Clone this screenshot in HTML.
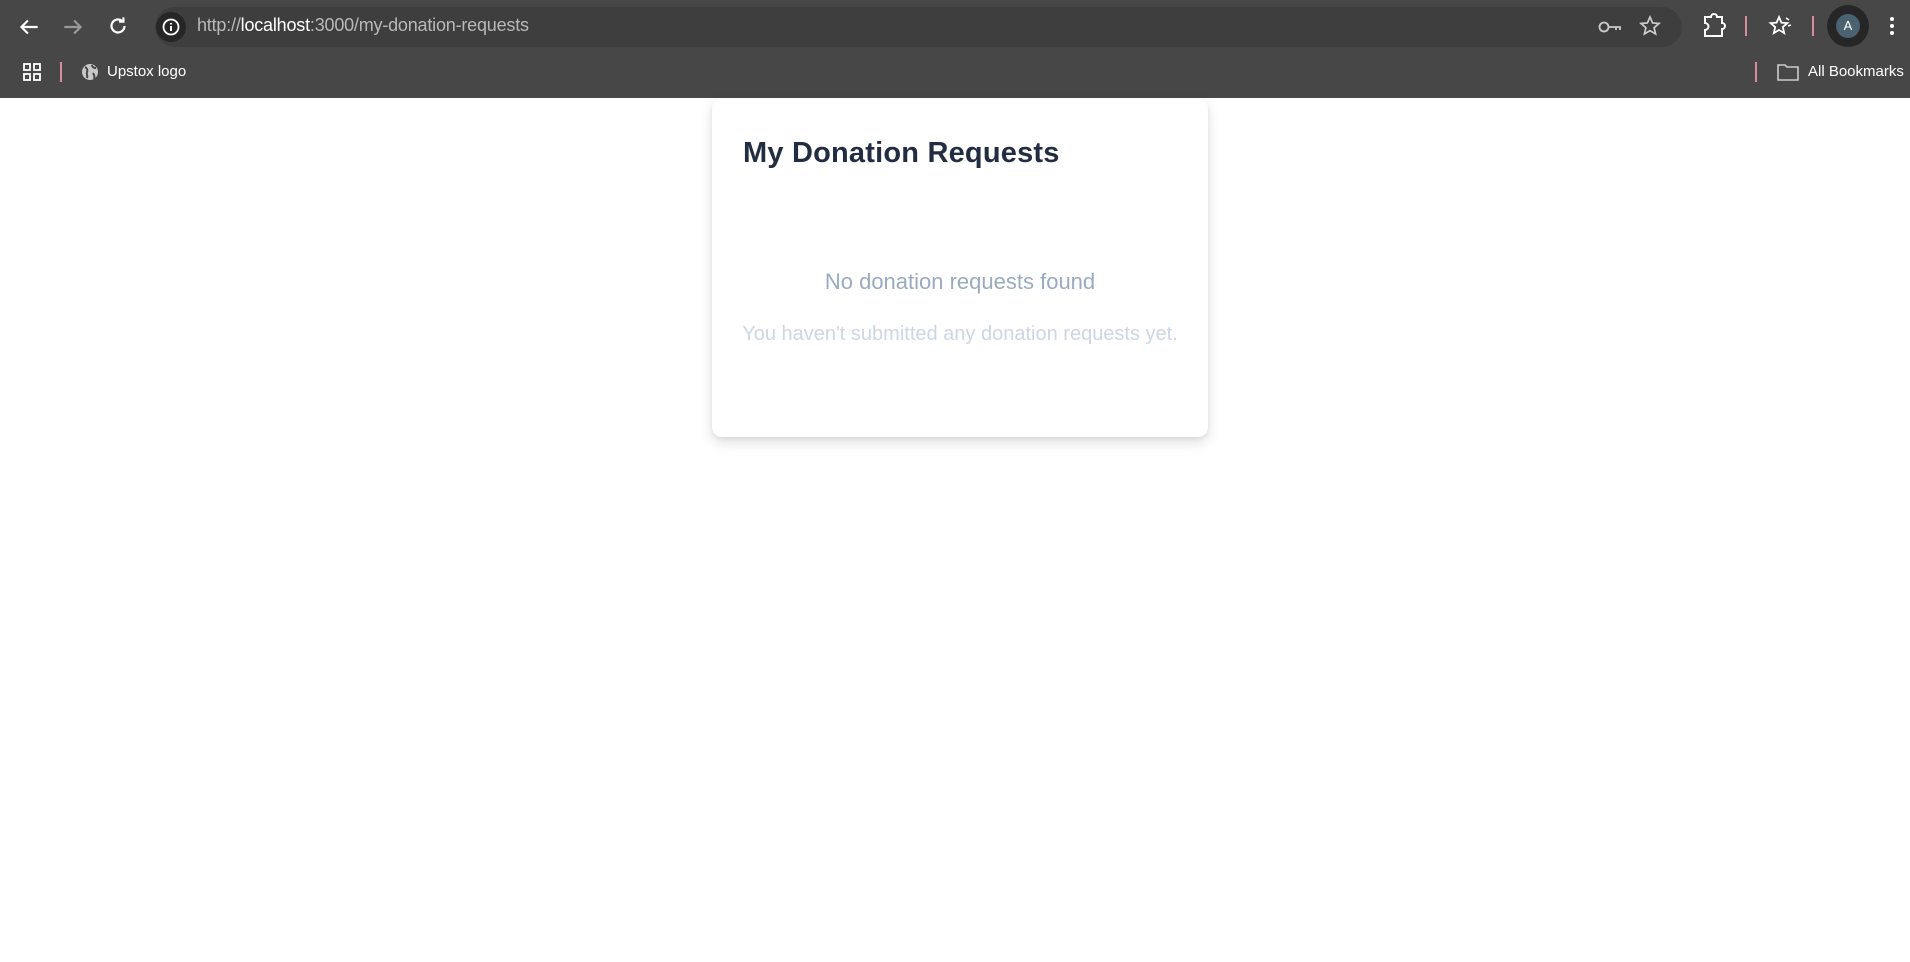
<!DOCTYPE html>
<html><head><meta charset="utf-8"><style>
*{margin:0;padding:0;box-sizing:border-box}
body{width:1910px;height:962px;background:#fff;font-family:"Liberation Sans",sans-serif;position:relative;overflow:hidden}
.chrome{position:absolute;left:0;top:0;width:1910px;height:98px;background:#474747}
.pill{position:absolute;left:155px;top:7px;width:1527px;height:40px;border-radius:20px;background:#3e3e3e}
.abs{position:absolute}
.url{left:197px;top:15px;font-size:18px;color:#b8b8b8;letter-spacing:-0.2px}
.url b{font-weight:normal;color:#fff}
.bm{font-size:15px;color:#fff}
.sep{width:2px;height:20px;background:#d98c9c}
.card{position:absolute;left:712px;top:98px;width:496px;height:339px;background:#fff;border-radius:10px;box-shadow:0 6px 14px rgba(0,0,0,.12),0 2px 4px rgba(0,0,0,.06)}
h1{position:absolute;left:31px;top:39px;font-size:29px;font-weight:bold;color:#232d42;letter-spacing:0.2px}
.t1{position:absolute;left:0;width:100%;top:171px;text-align:center;font-size:22px;color:#9aaac0}
.t2{position:absolute;left:0;width:100%;top:225px;text-align:center;font-size:20px;color:#cdd6e3}
</style></head><body>
<div class="chrome">
<div class="pill"></div>
<svg class="abs" style="left:16px;top:14px" width="26" height="26" viewBox="0 0 24 24"><path d="M20 12H5M11 6l-6 6 6 6" stroke="#fff" stroke-width="2" fill="none"/></svg>
<svg class="abs" style="left:60px;top:14px" width="26" height="26" viewBox="0 0 24 24"><path d="M4 12h15M13 6l6 6-6 6" stroke="#9a9a9a" stroke-width="2" fill="none"/></svg>
<svg class="abs" style="left:105px;top:13px" width="26" height="26" viewBox="0 0 24 24"><path d="M18 12a6 6 0 1 1-2-4.5M17 4v4h-4" stroke="#fff" stroke-width="2" fill="none"/></svg>
<div class="abs" style="left:156px;top:12px;width:30px;height:30px;border-radius:50%;background:#262626"></div>
<svg class="abs" style="left:161px;top:17px" width="20" height="20" viewBox="0 0 20 20"><circle cx="10" cy="10" r="7.5" stroke="#fff" stroke-width="1.8" fill="none"/><path d="M10 9v5M10 6v1.5" stroke="#fff" stroke-width="2"/></svg>
<div class="abs url">http://<b>localhost</b>:3000/my-donation-requests</div>
<svg class="abs" style="left:1598px;top:17px" width="24" height="20" viewBox="0 0 24 20"><circle cx="6" cy="10" r="4.5" stroke="#ccc" stroke-width="1.8" fill="none"/><path d="M10.5 10H22v3M18 10v3" stroke="#ccc" stroke-width="1.8" fill="none"/></svg>
<svg class="abs" style="left:1638px;top:14px" width="24" height="24" viewBox="0 0 24 24"><path d="M12 3l2.6 6 6.4.5-4.9 4.2 1.5 6.3L12 16.6 6.4 20l1.5-6.3L3 9.5l6.4-.5z" stroke="#ccc" stroke-width="1.7" fill="none"/></svg>
<svg class="abs" style="left:1702px;top:13px" width="24" height="26" viewBox="0 0 24 26"><path d="M3 4h6a3 3 0 0 1 6 0h5v6a3 3 0 0 1 0 6v7H3v-6a3 3 0 0 0 0-7z" stroke="#fff" stroke-width="2" fill="none"/></svg>
<div class="abs sep" style="left:1745px;top:16px"></div>
<svg class="abs" style="left:1768px;top:14px" width="26" height="24" viewBox="0 0 26 24"><path d="M11 3l2.4 5.6 6 .5-4.6 4 1.4 6-5.2-3.2-5.2 3.2 1.4-6-4.6-4 6-.5z" stroke="#fff" stroke-width="1.8" fill="none"/><path d="M18 4l3 2M20 12l3 -1" stroke="#fff" stroke-width="1.6"/></svg>
<div class="abs sep" style="left:1812px;top:16px"></div>
<div class="abs" style="left:1827px;top:5px;width:42px;height:42px;border-radius:50%;background:#262626"></div>
<div class="abs" style="left:1836px;top:14px;width:24px;height:24px;border-radius:50%;background:#4a6272;color:#fff;font-size:13px;text-align:center;line-height:24px">A</div>
<div class="abs" style="left:1890px;top:17px;width:4px;height:4px;border-radius:50%;background:#fff;box-shadow:0 7px 0 #fff,0 14px 0 #fff"></div>
<svg class="abs" style="left:23px;top:63px" width="18" height="18" viewBox="0 0 18 18"><g stroke="#fff" stroke-width="1.8" fill="none"><rect x="1" y="1" width="6" height="6"/><rect x="11" y="1" width="6" height="6"/><rect x="1" y="11" width="6" height="6"/><rect x="11" y="11" width="6" height="6"/></g></svg>
<div class="abs sep" style="left:60px;top:62px"></div>
<svg class="abs" style="left:81px;top:63px" width="18" height="18" viewBox="0 0 18 18"><circle cx="9" cy="9" r="8" fill="#c8c8c8"/><path d="M4 4c2 1 3 3 2 5s1 3 0 6M11 2c0 2 2 3 4 3M12 10c1 2 2 3 1 6" stroke="#474747" stroke-width="2" fill="none"/></svg>
<div class="abs bm" style="left:107px;top:63px">Upstox logo</div>
<div class="abs sep" style="left:1755px;top:62px"></div>
<svg class="abs" style="left:1777px;top:63px" width="22" height="18" viewBox="0 0 22 18"><path d="M1 2h7l2 2h11v13H1z" stroke="#ccc" stroke-width="1.6" fill="none"/></svg>
<div class="abs bm" style="left:1808px;top:63px">All Bookmarks</div>
</div>
<div class="card">
<h1>My Donation Requests</h1>
<div class="t1">No donation requests found</div>
<div class="t2">You haven't submitted any donation requests yet.</div>
</div>
</body></html>
